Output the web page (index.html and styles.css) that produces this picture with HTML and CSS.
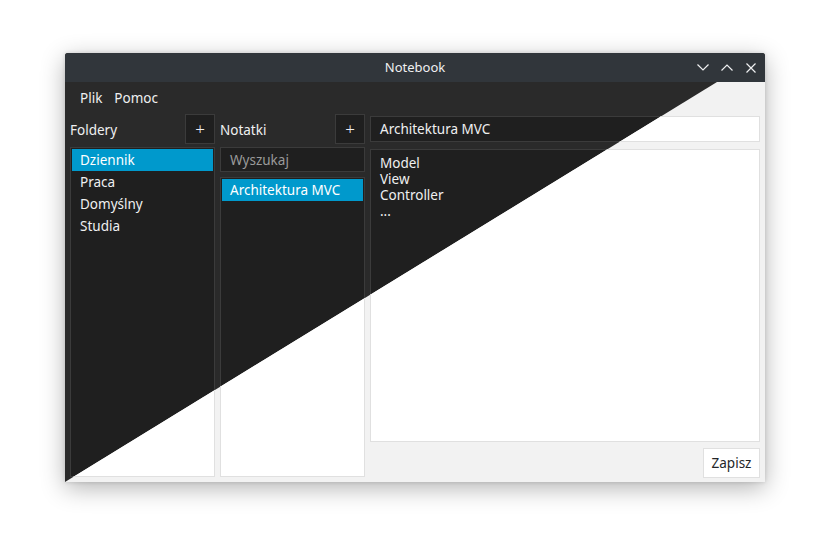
FILE: index.html
```html
<!DOCTYPE html>
<html lang="pl">
<head>
<meta charset="utf-8">
<title>Notebook</title>
<link rel="stylesheet" href="styles.css">
</head>
<body>
<div class="window">
  <div class="titlebar">
    <span></span>
    <span class="title">Notebook</span>
    <div class="controls">
      <span class="ctl"><svg width="12" height="7" viewBox="0 0 12 7"><path d="M0.5 0.5 L6 6 L11.5 0.5" fill="none" stroke="#eff0f1" stroke-width="1.2"/></svg></span>
      <span class="ctl"><svg width="12" height="7" viewBox="0 0 12 7"><path d="M0.5 6.5 L6 1 L11.5 6.5" fill="none" stroke="#eff0f1" stroke-width="1.2"/></svg></span>
      <span class="ctl"><svg width="10" height="10" viewBox="0 0 10 10"><path d="M0.5 0.5 L9.5 9.5 M9.5 0.5 L0.5 9.5" fill="none" stroke="#eff0f1" stroke-width="1.2"/></svg></span>
    </div>
  </div>
  <div class="stack">
    <div class="theme dark">
      <div class="menubar"><span class="menu">Plik</span><span class="menu">Pomoc</span></div>
      <div class="main">
        <div class="col col-folders">
          <div class="head"><span class="label">Foldery</span><span class="btn-add">+</span></div>
          <div class="list list-f">
            <div class="item sel">Dziennik</div>
            <div class="item">Praca</div>
            <div class="item">Domyślny</div>
            <div class="item">Studia</div>
          </div>
        </div>
        <div class="col col-notes">
          <div class="head"><span class="label">Notatki</span><span class="btn-add">+</span></div>
          <div class="field search"><span class="ph">Wyszukaj</span></div>
          <div class="list list-n">
            <div class="item sel">Architektura MVC</div>
          </div>
        </div>
        <div class="col col-editor">
          <div class="field title-in">Architektura MVC</div>
          <div class="field editor">Model<br>View<br>Controller<br>...</div>
          <div class="actions"><span class="btn-save">Zapisz</span></div>
        </div>
      </div>
    </div>
    <div class="theme light" aria-hidden="true">
      <div class="menubar"><span class="menu">Plik</span><span class="menu">Pomoc</span></div>
      <div class="main">
        <div class="col col-folders">
          <div class="head"><span class="label">Foldery</span><span class="btn-add">+</span></div>
          <div class="list list-f">
            <div class="item sel">Dziennik</div>
            <div class="item">Praca</div>
            <div class="item">Domyślny</div>
            <div class="item">Studia</div>
          </div>
        </div>
        <div class="col col-notes">
          <div class="head"><span class="label">Notatki</span><span class="btn-add">+</span></div>
          <div class="field search"><span class="ph">Wyszukaj</span></div>
          <div class="list list-n">
            <div class="item sel">Architektura MVC</div>
          </div>
        </div>
        <div class="col col-editor">
          <div class="field title-in">Architektura MVC</div>
          <div class="field editor">Model<br>View<br>Controller<br>...</div>
          <div class="actions"><span class="btn-save">Zapisz</span></div>
        </div>
      </div>
    </div>
  </div>
</div>
</body>
</html>
```
FILE: styles.css
```css
* { box-sizing: border-box; }
html, body { margin: 0; background: #ffffff; }
body {
  padding: 53px 0 0 65px;
  height: 559px;
  font-family: "Noto Sans", "Open Sans", sans-serif;
  font-size: 13.5px;
  line-height: 16px;
}
.window {
  width: 700px;
  border-radius: 3px 3px 0 0;
  background: #2a2a2a;
  box-shadow: 0 6px 24px rgba(0,0,0,0.30), 0 0 4px rgba(0,0,0,0.14);
}
.titlebar {
  height: 29px;
  background: #31363b;
  color: #eff0f1;
  border-radius: 3px 3px 0 0;
  display: grid;
  grid-template-columns: 1fr auto 1fr;
  align-items: center;
}
.title { line-height: 29px; font-size: 13px; }
.controls {
  justify-self: end;
  display: flex;
  padding-right: 2px;
}
.ctl {
  width: 24px;
  height: 29px;
  display: flex;
  align-items: center;
  justify-content: center;
}
.stack {
  display: grid;
  height: 400px;
}
.theme {
  grid-area: 1 / 1;
  display: flex;
  flex-direction: column;
  padding: 0 5px 4px;
}
.menubar {
  height: 30px;
  display: flex;
  align-items: center;
  padding-left: 9px;
  padding-top: 1px;
  margin-bottom: 2px;
}
.menu { padding: 0 6px 0 6px; }
.menu:first-child { margin-left: -5px; }
.main {
  flex: 1;
  display: flex;
  gap: 5px;
  min-height: 0;
}
.col {
  display: flex;
  flex-direction: column;
}
.col-folders, .col-notes { width: 145px; }
.col-editor { flex: 1; padding-top: 2px; }
.head {
  height: 30px;
  display: flex;
  align-items: center;
  justify-content: space-between;
}
.label { padding-top: 1px; }
.btn-add {
  width: 30px;
  height: 30px;
  display: flex;
  align-items: center;
  justify-content: center;
  font-size: 17px;
  font-weight: 300;
  border: 1px solid;
}
.list {
  border: 1px solid;
  padding: 1px;
  flex: 1;
  margin-bottom: 1px;
}
.list-f { margin-top: 3px; }
.list-n { margin-top: 5px; padding-top: 1px; }
.item {
  height: 22px;
  line-height: 21px;
  padding-top: 1px;
  padding-left: 8px;
}
.field {
  border: 1px solid;
  padding: 0 9px;
}
.search {
  margin-top: 3px;
  height: 25px;
  line-height: 24px;
}
.title-in {
  height: 26px;
  line-height: 25px;
}
.editor {
  margin-top: 7px;
  flex: 1;
  padding-top: 5px;
}
.actions {
  margin-top: 6px;
  display: flex;
  justify-content: flex-end;
}
.btn-save {
  width: 57px;
  height: 30px;
  line-height: 29px;
  text-align: center;
  border: 1px solid;
}

/* dark theme */
.dark { background: #2a2a2a; color: #eff0f1; }
.dark .btn-add { background: #1f1f1f; border-color: #3b3b3b; }
.dark .list, .dark .field { background: #1f1f1f; border-color: #3b3b3b; }
.dark .ph { color: #9a9a9a; }
.dark .sel { background: #0099cc; color: #ffffff; }
.dark .btn-save { background: #1f1f1f; border-color: #3b3b3b; }

/* light theme */
.light {
  background: #f2f2f2;
  color: #232629;
  clip-path: polygon(652px 0, 100% 0, 100% 100%, 0 100%);
}
.light .btn-add { background: #ffffff; border-color: #e0e0e0; }
.light .list, .light .field { background: #ffffff; border-color: #e0e0e0; }
.light .ph { color: #8a8a8a; }
.light .sel { background: #0099cc; color: #ffffff; }
.light .btn-save { background: #ffffff; border-color: #e0e0e0; }
```
